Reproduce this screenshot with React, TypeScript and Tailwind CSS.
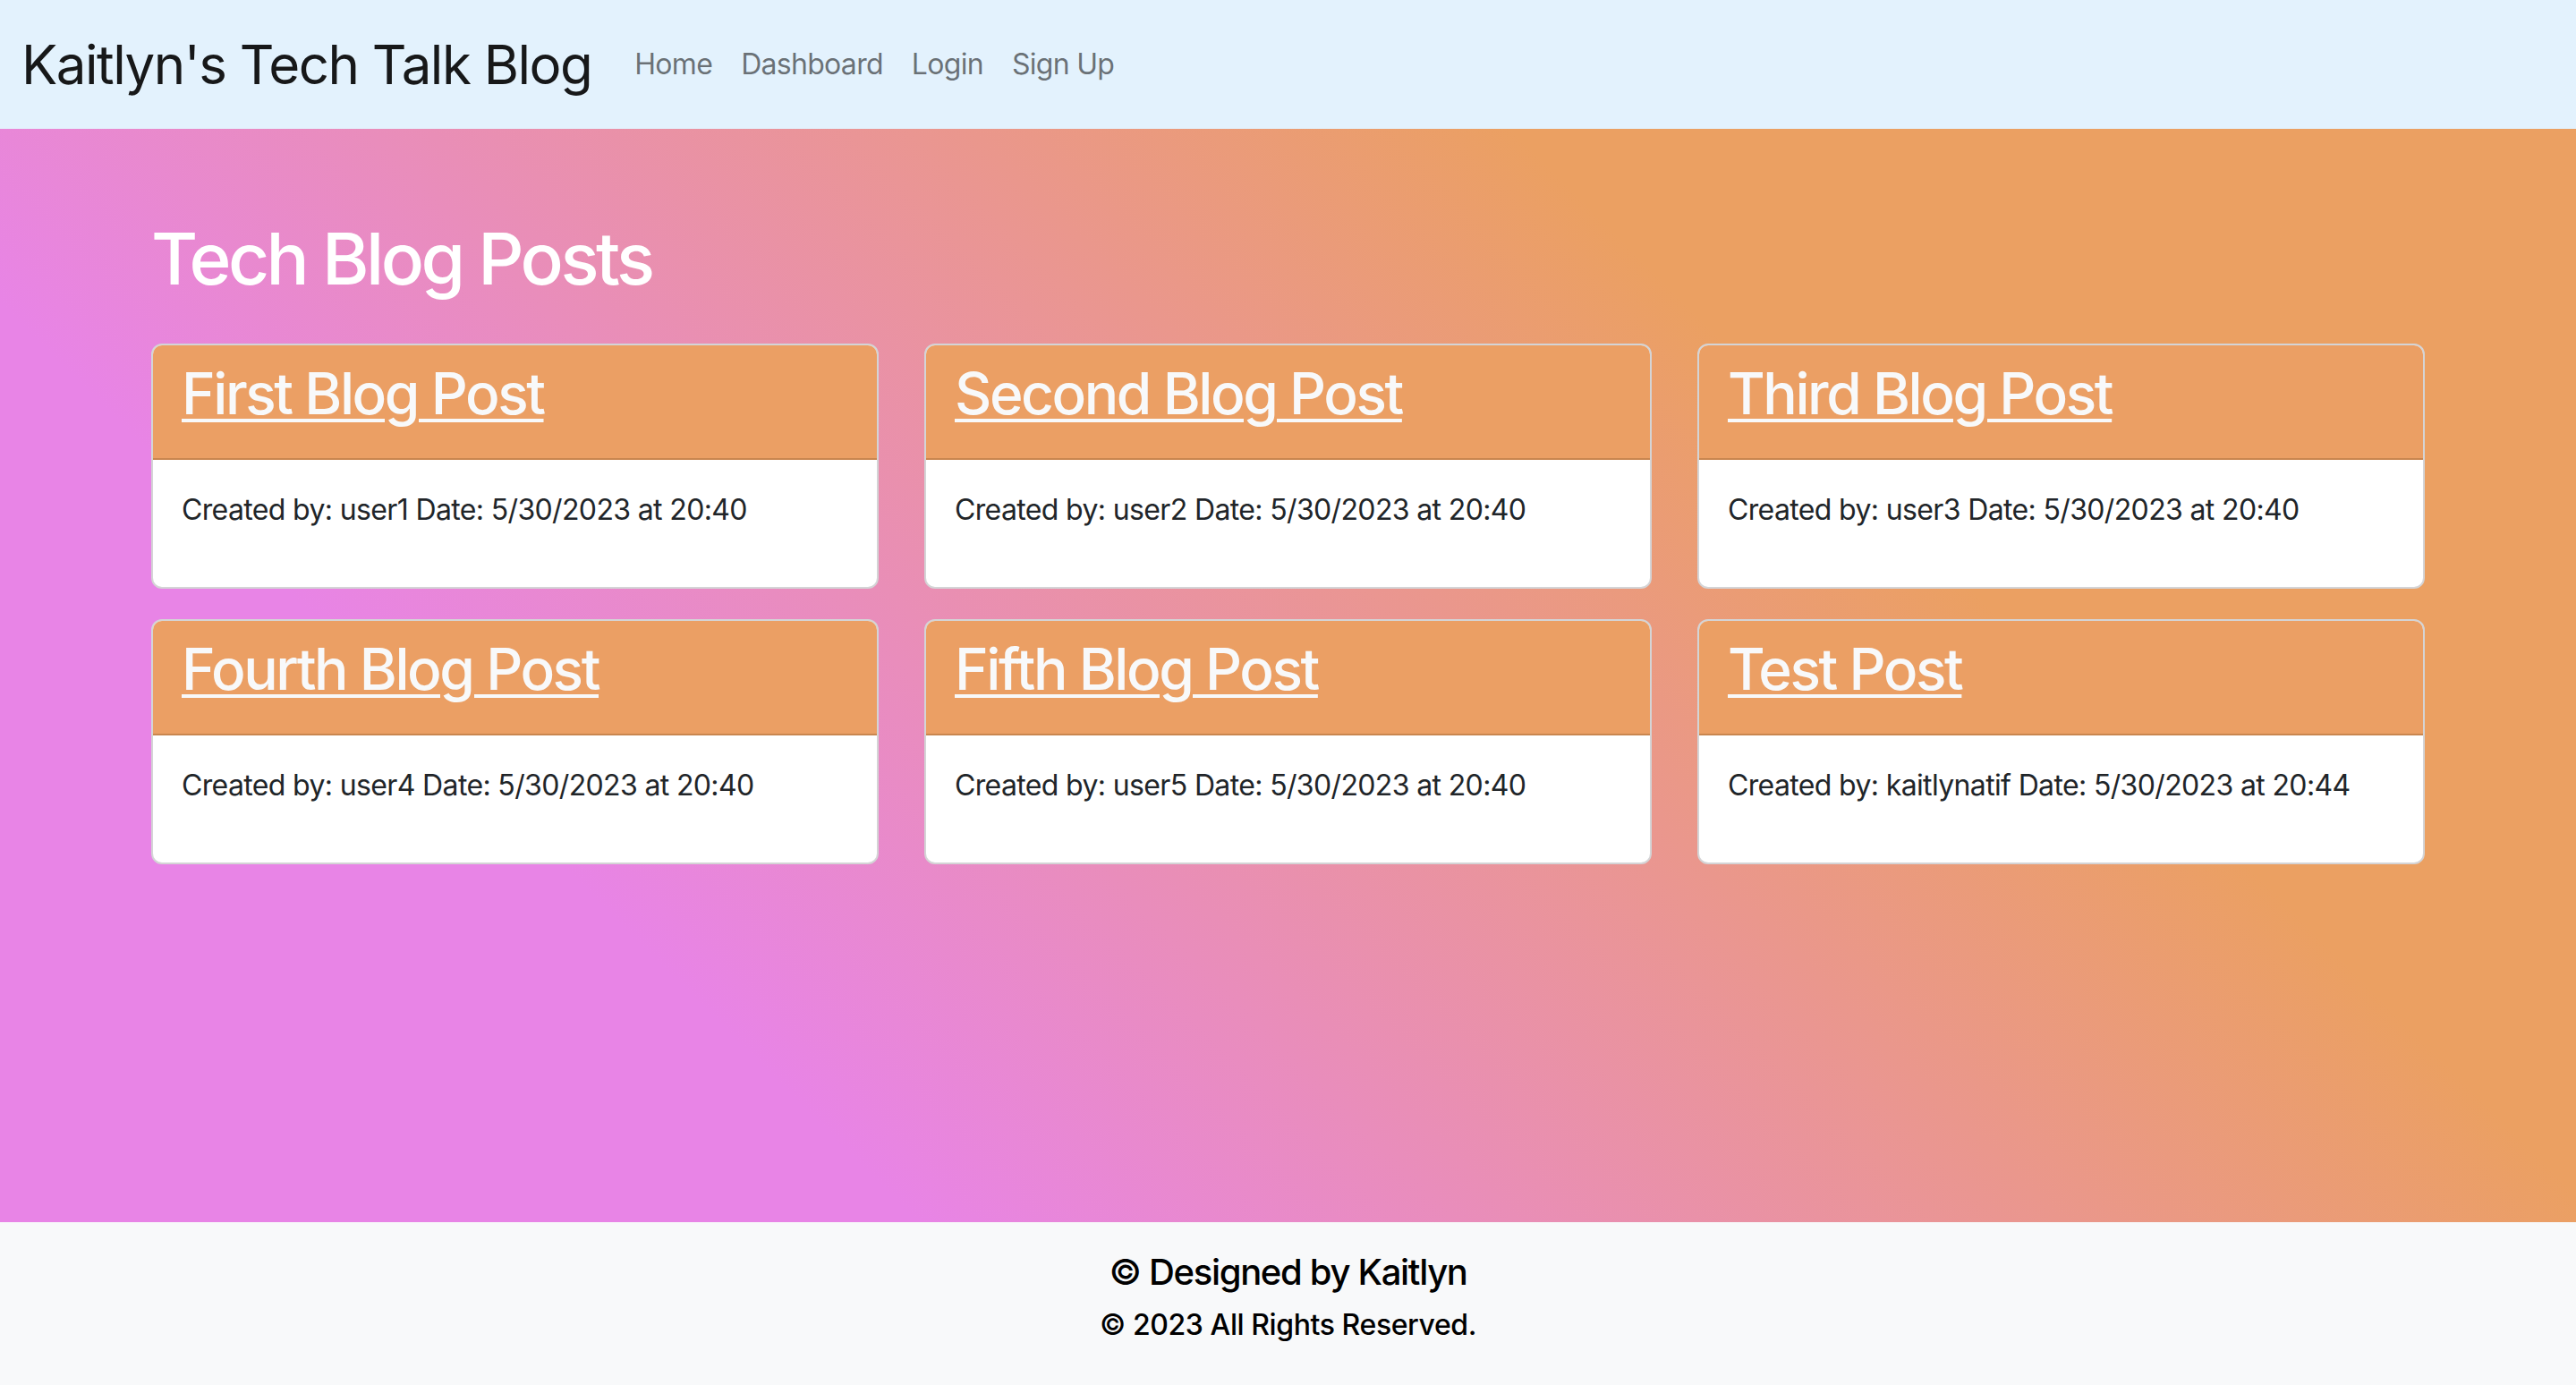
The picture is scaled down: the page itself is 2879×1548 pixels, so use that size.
import React from 'react';

type Post = { title: string; user: string; date: string };

const posts: Post[] = [
  { title: 'First Blog Post', user: 'user1', date: '5/30/2023 at 20:40' },
  { title: 'Second Blog Post', user: 'user2', date: '5/30/2023 at 20:40' },
  { title: 'Third Blog Post', user: 'user3', date: '5/30/2023 at 20:40' },
  { title: 'Fourth Blog Post', user: 'user4', date: '5/30/2023 at 20:40' },
  { title: 'Fifth Blog Post', user: 'user5', date: '5/30/2023 at 20:40' },
  { title: 'Test Post', user: 'kaitlynatif', date: '5/30/2023 at 20:44' },
];

const navLinks = ['Home', 'Dashboard', 'Login', 'Sign Up'];

function PostCard({ post }: { post: Post }) {
  return (
    <div className="overflow-hidden rounded-[12px] border-2 border-[#d4d4d6] bg-white">
      <div className="h-[128px] border-b-2 border-[#c9864f] bg-[#eb9f64] px-[32px] pt-[16px]">
        <a
          href="#"
          className="text-[64px] font-medium leading-[1.2] tracking-[-0.038em] text-[#f8f9fa] underline decoration-[4px] underline-offset-[5px]"
        >
          {post.title}
        </a>
      </div>
      <div className="h-[142px] px-[32px] pt-[32px]">
        <p className="text-[32px] leading-[1.5] tracking-[-0.02em] text-[#212529]">
          Created by: {post.user} Date: {post.date}
        </p>
      </div>
    </div>
  );
}

export default function App() {
  return (
    <div className="flex min-h-screen flex-col font-['Inter','Noto_Sans',sans-serif]">
      <nav className="flex h-[144px] items-center bg-[#e3f2fd] pl-[24px]">
        <a href="#" className="mr-[32px] text-[60px] leading-[1.5] tracking-[-0.025em] text-black/90">
          Kaitlyn's Tech Talk Blog
        </a>
        <ul className="flex">
          {navLinks.map((l) => (
            <li key={l}>
              <a
                href="#"
                className="block px-[16px] text-[32px] leading-[1.5] tracking-[-0.022em] text-black/55"
              >
                {l}
              </a>
            </li>
          ))}
        </ul>
      </nav>

      <main className="flex-1 bg-[linear-gradient(45deg,#e884e6_25%,#eba062_71%)] px-[169px] pt-[97px]">
        <h1 className="mb-[47px] text-[80px] font-medium leading-[1.2] tracking-[-0.044em] text-white">
          Tech Blog Posts
        </h1>
        <div className="grid grid-cols-3 gap-x-[51px] gap-y-[34px]">
          {posts.map((p) => (
            <PostCard key={p.title} post={p} />
          ))}
        </div>
      </main>

      <footer className="h-[182px] bg-[#f8f9fa] pt-[32px] text-center text-black">
        <h5 className="mb-[11px] text-[40px] font-medium leading-[1.2] tracking-[-0.033em]">
          © Designed by Kaitlyn
        </h5>
        <p className="text-[32px] font-medium leading-[1.5] tracking-[-0.013em]">© 2023 All Rights Reserved.</p>
      </footer>
    </div>
  );
}
